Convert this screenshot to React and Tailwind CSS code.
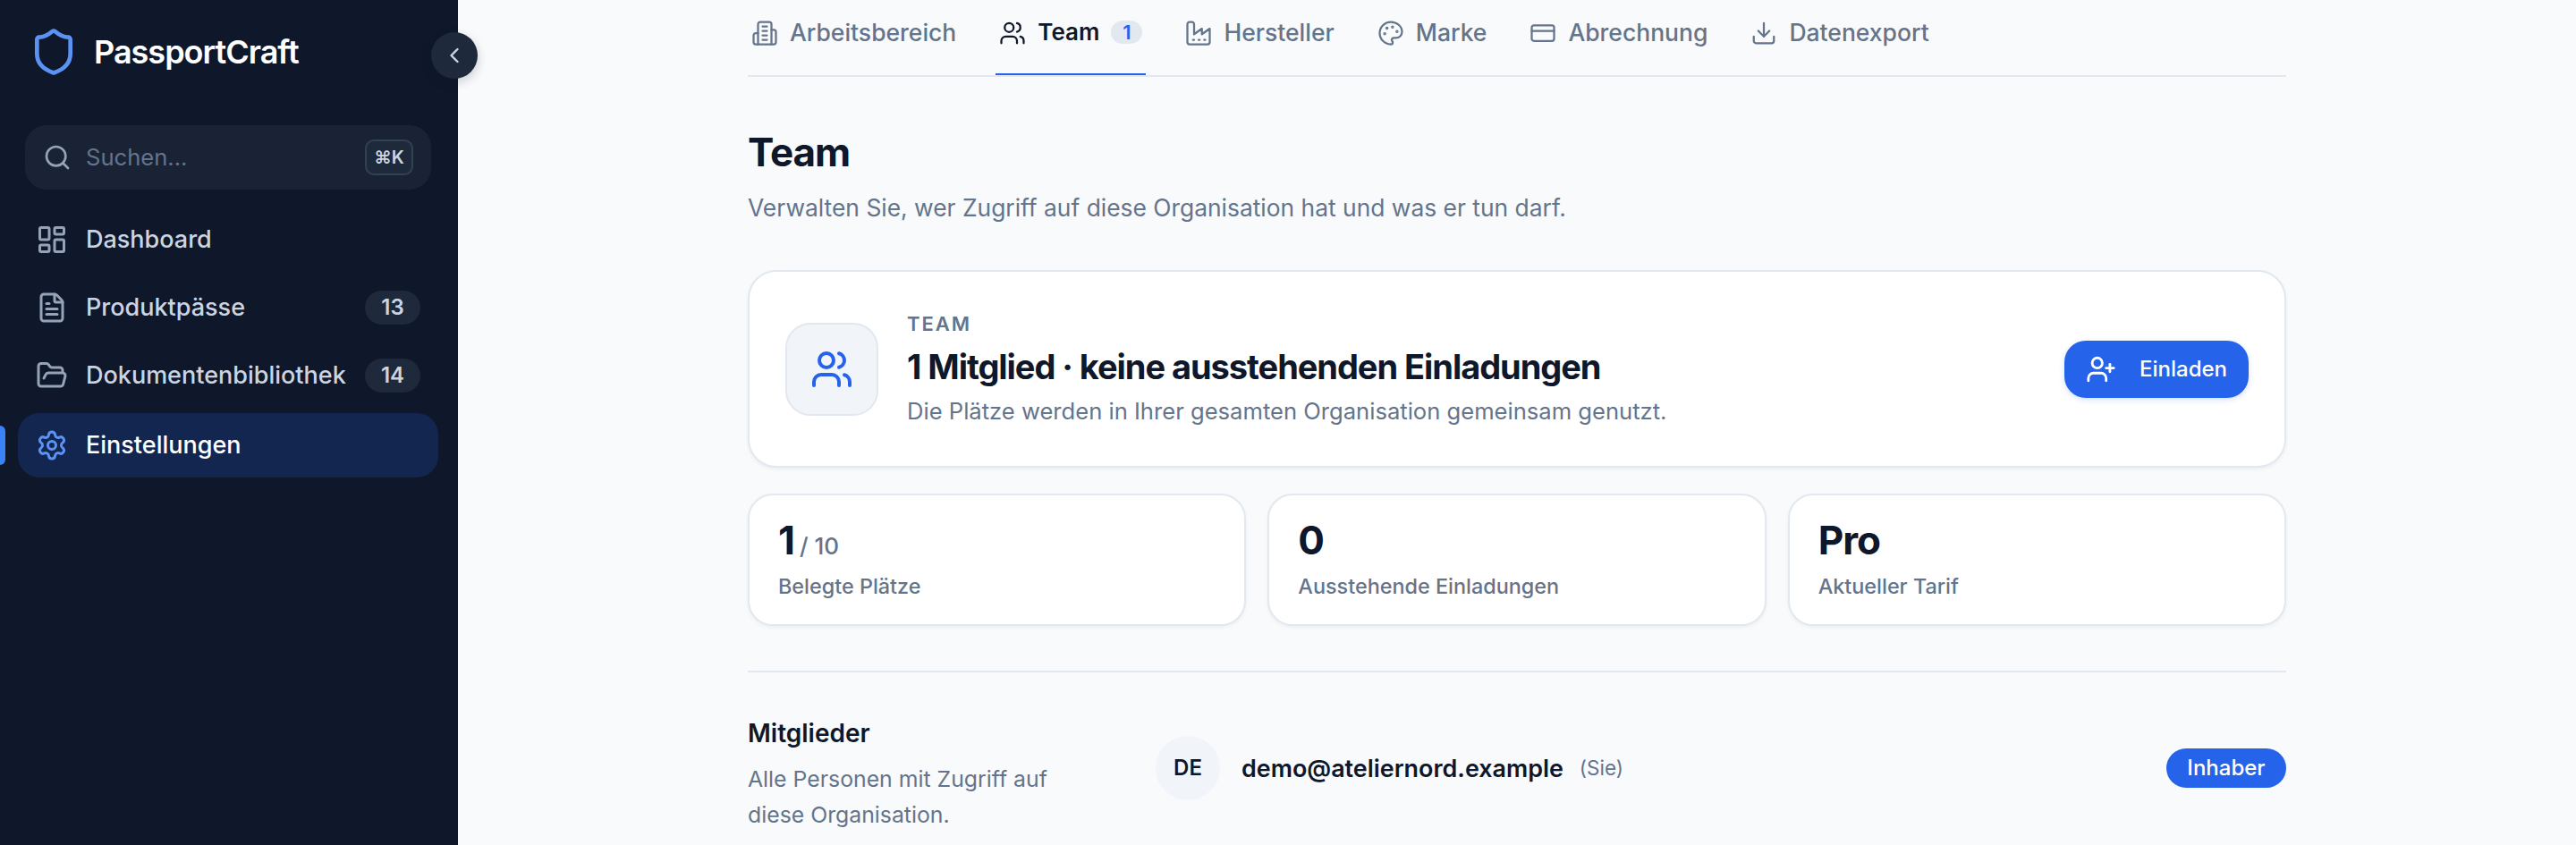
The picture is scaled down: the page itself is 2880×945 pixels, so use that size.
import React from "react";
import {
  Users, CreditCard, Download, LayoutDashboard, FileText,
  FolderOpen, Settings, Search, ChevronLeft, UserPlus, Shield,
} from "lucide-react";

function Svg({ className, children }) {
  return (
    <svg viewBox="0 0 24 24" fill="none" stroke="currentColor" strokeWidth={1.8} strokeLinecap="round" strokeLinejoin="round" className={className}>
      {children}
    </svg>
  );
}

function Building({ className }) {
  return (
    <Svg className={className}>
      <path d="M6 22V4a2 2 0 0 1 2-2h8a2 2 0 0 1 2 2v18Z" />
      <path d="M6 12H4a2 2 0 0 0-2 2v6a2 2 0 0 0 2 2h2" />
      <path d="M18 9h2a2 2 0 0 1 2 2v9a2 2 0 0 1-2 2h-2" />
      <path d="M10 6h4" />
      <path d="M10 10h4" />
      <path d="M10 14h4" />
      <path d="M10 18h4" />
    </Svg>
  );
}

function FactoryIcon({ className }) {
  return (
    <Svg className={className}>
      <path d="M2 20a2 2 0 0 0 2 2h16a2 2 0 0 0 2-2V8l-7 5V8l-7 5V4a2 2 0 0 0-2-2H4a2 2 0 0 0-2 2Z" />
      <path d="M17 18h1" />
      <path d="M12 18h1" />
      <path d="M7 18h1" />
    </Svg>
  );
}

function PaletteIcon({ className }) {
  return (
    <Svg className={className}>
      <circle cx="13.5" cy="6.5" r=".5" fill="currentColor" />
      <circle cx="17.5" cy="10.5" r=".5" fill="currentColor" />
      <circle cx="8.5" cy="7.5" r=".5" fill="currentColor" />
      <circle cx="6.5" cy="12.5" r=".5" fill="currentColor" />
      <path d="M12 2C6.5 2 2 6.5 2 12s4.5 10 10 10c.926 0 1.648-.746 1.648-1.688 0-.437-.18-.835-.437-1.125-.29-.289-.438-.652-.438-1.125a1.64 1.64 0 0 1 1.668-1.668h1.996c3.051 0 5.555-2.503 5.555-5.554C21.965 6.012 17.461 2 12 2z" />
    </Svg>
  );
}

function NavItem({ icon: Icon, label, badge, active }) {
  return (
    <div className={active
      ? "relative flex h-[72px] items-center gap-[20px] rounded-[24px] bg-[#13264f] pl-[20px] pr-[20px] text-[27px] font-medium text-white"
      : "flex h-[72px] items-center gap-[20px] rounded-[24px] pl-[20px] pr-[20px] text-[27px] font-medium text-[#cbd5e1]"}>
      <Icon className={active ? "size-[36px] shrink-0 text-[#5b93f5]" : "size-[36px] shrink-0 text-[#94a3b8]"} strokeWidth={2} />
      <span className="whitespace-nowrap">{label}</span>
      {badge && (
        <span className="ml-auto flex h-[38px] w-[62px] shrink-0 items-center justify-center rounded-full bg-[#1e293b] text-[24px] font-semibold text-[#cbd5e1]">
          {badge}
        </span>
      )}
    </div>
  );
}

function Tab({ icon: Icon, label, badge, active }) {
  return (
    <div className={active
      ? "flex h-[84px] items-start gap-[13px] border-b-[2px] border-[#2563eb] px-[4px] pt-[20px] text-[26px] font-semibold text-[#0f172a]"
      : "flex h-[84px] items-start gap-[13px] px-[4px] pt-[20px] text-[26.5px] font-medium text-[#64748b]"}>
      <Icon className="mt-[2px] size-[30px] shrink-0" strokeWidth={1.8} />
      <span className="leading-[32px] whitespace-nowrap">{label}</span>
      {badge && (
        <span className="mt-[3px] flex h-[26px] w-[35px] items-center justify-center rounded-full bg-[#e2e8f0] text-[22px] font-semibold text-[#2563eb]">
          {badge}
        </span>
      )}
    </div>
  );
}

function Stat({ value, sub, label }) {
  return (
    <div className="h-[148px] rounded-[28px] border-2 border-[#e2e8f0] bg-white px-[32px] pt-[22px] shadow-[0_2px_4px_rgba(15,23,42,0.05)]">
      <div className="flex items-baseline">
        <span className="text-[44px] leading-[56px] font-bold tracking-[-1px] text-[#0f172a]">{value}</span>
        {sub && <span className="ml-[6px] text-[26px] font-medium text-[#64748b]">{sub}</span>}
      </div>
      <div className="mt-[6px] text-[23.4px] leading-[36px] font-medium text-[#64748b]">{label}</div>
    </div>
  );
}

export default function App() {
  return (
    <div className="flex h-screen overflow-hidden bg-[#f8fafc] font-['Inter',sans-serif]">
      <aside className="relative flex w-[512px] shrink-0 flex-col bg-[#0f172a]">
        <div className="flex h-[116px] items-center gap-[17px] pl-[32px]">
          <Shield className="size-[56px] text-[#5b93f5]" strokeWidth={2} />
          <span className="text-[36px] font-semibold tracking-[-1px] text-white">PassportCraft</span>
        </div>
        <button className="absolute left-[482px] top-[36px] flex size-[52px] items-center justify-center rounded-full bg-[#1e293b] text-[#cbd5e1] shadow-[0_4px_12px_rgba(15,23,42,0.2)]">
          <ChevronLeft className="size-[28px]" strokeWidth={2} />
        </button>
        <div className="ml-[28px] mr-[30px] mt-[24px] flex h-[72px] items-center rounded-[24px] bg-[#1a2335] pl-[20px] pr-[20px]">
          <Search className="size-[32px] text-[#94a3b8]" strokeWidth={2} />
          <span className="ml-[16px] text-[25.6px] text-[#64748b]">Suchen...</span>
          <span className="ml-auto flex h-[40px] w-[54px] items-center justify-center rounded-[10px] border-2 border-[#334155] bg-[#1e293b] text-[20px] font-semibold text-[#cbd5e1]">⌘K</span>
        </div>
        <nav className="ml-[20px] mr-[22px] mt-[20px] flex flex-col gap-[4px]">
          <NavItem icon={LayoutDashboard} label="Dashboard" />
          <NavItem icon={FileText} label="Produktpässe" badge="13" />
          <NavItem icon={FolderOpen} label="Dokumentenbibliothek" badge="14" />
          <div className="mt-[2px]">
            <NavItem icon={Settings} label="Einstellungen" active />
          </div>
        </nav>
        <div className="absolute left-0 top-[476px] h-[44px] w-[6px] rounded-r-[6px] bg-[#3b82f6]" />
      </aside>

      <main className="min-w-0 flex-1">
        <div className="mx-auto w-[1720px]">
          <div className="flex gap-[40px] border-b-2 border-[#e2e8f0]">
            <Tab icon={Building} label="Arbeitsbereich" />
            <Tab icon={Users} label="Team" badge="1" active />
            <Tab icon={FactoryIcon} label="Hersteller" />
            <Tab icon={PaletteIcon} label="Marke" />
            <Tab icon={CreditCard} label="Abrechnung" />
            <Tab icon={Download} label="Datenexport" />
          </div>

          <h1 className="mt-[54px] text-[44px] leading-[60px] font-bold tracking-[-1px] text-[#0f172a]">Team</h1>
          <p className="mt-[12px] text-[26.4px] leading-[40px] text-[#64748b]">Verwalten Sie, wer Zugriff auf diese Organisation hat und was er tun darf.</p>

          <section className="mt-[50px] flex h-[221px] items-center rounded-[32px] border-2 border-[#e2e8f0] bg-white px-[40px] shadow-[0_2px_4px_rgba(15,23,42,0.05)]">
            <div className="flex size-[104px] shrink-0 items-center justify-center rounded-[28px] border-2 border-[#e2e8f0] bg-[#f1f5f9] text-[#2563eb]">
              <Users className="size-[48px]" strokeWidth={2} />
            </div>
            <div className="ml-[32px] min-w-0 flex-1">
              <div className="text-[22px] leading-[32px] font-semibold tracking-[2px] text-[#64748b]">TEAM</div>
              <div className="mt-[6px] text-[38px] leading-[52px] font-bold tracking-[-1.05px] text-[#0f172a]">1 Mitglied · keine ausstehenden Einladungen</div>
              <div className="mt-[4px] text-[25.6px] leading-[40px] text-[#64748b]">Die Plätze werden in Ihrer gesamten Organisation gemeinsam genutzt.</div>
            </div>
            <button className="flex h-[64px] w-[206px] items-center gap-[26px] rounded-[24px] bg-[#2563eb] pl-[24px] text-[24px] font-medium text-white shadow-[0_2px_6px_rgba(37,99,235,0.2)]">
              <UserPlus className="size-[34px]" strokeWidth={2} />
              Einladen
            </button>
          </section>

          <div className="mt-[29px] grid grid-cols-3 gap-[24px]">
            <Stat value="1" sub="/ 10" label="Belegte Plätze" />
            <Stat value="0" label="Ausstehende Einladungen" />
            <Stat value="Pro" label="Aktueller Tarif" />
          </div>

          <div className="mt-[50px] h-[2px] bg-[#e2e8f0]" />

          <div className="mt-[50px] flex">
            <div className="w-[456px] shrink-0">
              <h2 className="text-[28px] leading-[36px] font-semibold text-[#0f172a]">Mitglieder</h2>
              <p className="mt-[13px] w-[380px] text-[24.8px] leading-[40px] text-[#64748b]">Alle Personen mit Zugriff auf diese Organisation.</p>
            </div>
            <div className="mt-[21px] flex h-[72px] flex-1 items-center">
              <div className="flex size-[72px] items-center justify-center rounded-full bg-[#f1f5f9] text-[24px] font-semibold text-[#0f172a]">DE</div>
              <span className="ml-[24px] text-[26.9px] font-semibold text-[#0f172a]">demo@ateliernord.example</span>
              <span className="ml-[18px] text-[22.5px] text-[#64748b]">(Sie)</span>
              <span className="ml-auto flex h-[44px] w-[134px] items-center justify-center rounded-[22px] bg-[#2563eb] text-[24px] font-medium text-white">Inhaber</span>
            </div>
          </div>
        </div>
      </main>
    </div>
  );
}
